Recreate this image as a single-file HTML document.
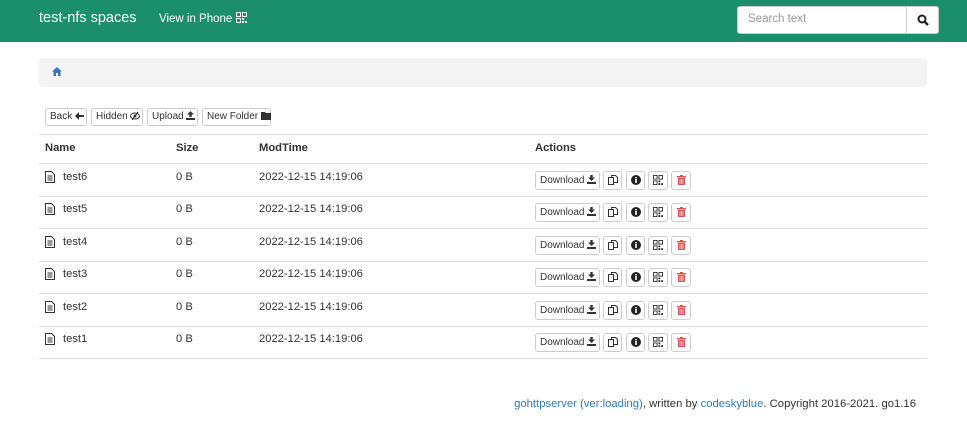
<!DOCTYPE html>
<html><head><meta charset="utf-8"><style>
*{box-sizing:border-box;margin:0;padding:0}
body{width:967px;height:428px;font-family:"Liberation Sans",Arial,sans-serif;font-size:11.2px;color:#333;background:#fff;position:relative;overflow:hidden}
.nav{position:absolute;left:0;top:0;width:967px;height:42px;background:#1b8e6b}
.a{position:absolute;white-space:nowrap}
.brand{left:39px;top:10px;font-size:14.5px;color:#fff}
.vp{left:159px;top:12px;font-size:11.5px;color:#fff}
.search{left:737px;top:6px;width:170px;height:28px;background:#fff;border:1px solid #ccc;border-radius:3px 0 0 3px;color:#999;padding:6px 10px;font-size:11.5px}
.sbtn{left:906px;top:6px;width:33px;height:28px;background:#fff;border:1px solid #ccc;border-radius:0 3px 3px 0}
.bc{left:39px;top:58px;width:888px;height:29px;background:#f4f4f4;border-radius:4px}
.btn{position:absolute;height:18px;border:1px solid #ccc;border-radius:3px;background:#fff;font-size:10px;padding:2px 4px;line-height:12px;white-space:nowrap;color:#333}
.hl{position:absolute;left:39px;width:888px;height:1px;background:#ddd}
.th{font-weight:bold;top:142px}
.ic{display:inline-block;vertical-align:-1px}
a{color:#337ab7;text-decoration:none}
</style></head><body>
<div class="nav"></div>
<div class="a brand">test-nfs spaces</div>
<div class="a vp">View in Phone <svg class="ic" width="11" height="11" viewBox="0 0 11 11" fill="#fff"><rect x=".5" y=".5" width="4" height="4" fill="none" stroke="#fff"/><rect x="6.5" y=".5" width="4" height="4" fill="none" stroke="#fff" /><rect x=".5" y="6.5" width="4" height="4" fill="none" stroke="#fff"/><rect x="6" y="6" width="2" height="2"/><rect x="9" y="9" width="2" height="2"/><rect x="6" y="9" width="2" height="2"/></svg></div>
<div class="a search">Search text</div>
<div class="a sbtn"><svg style="position:absolute;left:10px;top:7px" width="12" height="12" viewBox="0 0 12 12"><circle cx="5" cy="5" r="3.5" fill="none" stroke="#222" stroke-width="2"/><path d="M7.5 7.5L11 11" stroke="#222" stroke-width="2.4"/></svg></div>
<div class="a bc"><svg style="position:absolute;left:13px;top:9px" width="10" height="9" viewBox="0 0 10 9"><path d="M5 0L0 4.5h1.5V9h2.5V6h2v3h2.5V4.5H10z" fill="#337ab7"/></svg></div>
<div class="btn" style="left:45px;top:108px;width:42px">Back <svg class="ic" width="9" height="8" viewBox="0 0 9 8"><path d="M4 0L0 4l4 4V5h5V3H4z" fill="#333"/></svg></div>
<div class="btn" style="left:91px;top:108px;width:52px">Hidden <svg class="ic" width="10" height="8" viewBox="0 0 10 8"><ellipse cx="5" cy="4" rx="4.5" ry="3" fill="none" stroke="#333"/><circle cx="5" cy="4" r="1.5" fill="#333"/><path d="M8 0L2 8" stroke="#333"/></svg></div>
<div class="btn" style="left:147px;top:108px;width:51px">Upload <svg class="ic" width="9" height="9" viewBox="0 0 9 9"><path d="M4.5 0L1 3.5h2.3V6h2.4V3.5H8z" fill="#333"/><path d="M0 7h9v2H0z" fill="#333"/></svg></div>
<div class="btn" style="left:202px;top:108px;width:69px">New Folder <svg class="ic" width="10" height="8" viewBox="0 0 10 8"><path d="M0 0h4l1 1h5v7H0z" fill="#333"/></svg></div>
<div class="hl" style="top:134px"></div>
<div class="a th" style="left:45px">Name</div>
<div class="a th" style="left:176px">Size</div>
<div class="a th" style="left:259px">ModTime</div>
<div class="a th" style="left:535px">Actions</div>
<div class="hl" style="top:163px;height:1px"></div>
<div id="rows"></div>
<script>
var n=['test6','test5','test4','test3','test2','test1'],h='';
for(var i=0;i<6;i++){var y=164+i*32.4;
h+='<div class="hl" style="top:'+(y+32)+'px"></div>';
h+='<svg class="a" style="left:45px;top:'+(y+7)+'px" width="10" height="12" viewBox="0 0 10 12"><path d="M.5.5h6l3 3v8h-9z" fill="none" stroke="#333"/><path d="M2.5 5h5M2.5 7h5M2.5 9h5" stroke="#333"/></svg>';
h+='<div class="a" style="left:63px;top:'+(y+7)+'px">'+n[i]+'</div>';
h+='<div class="a" style="left:176px;top:'+(y+7)+'px">0 B</div>';
h+='<div class="a" style="left:259px;top:'+(y+7)+'px">2022-12-15 14:19:06</div>';
var t=y+7;
h+='<div class="btn" style="left:535px;top:'+t+'px;height:19px;width:65px;padding:3px 4px">Download <svg class="ic" width="9" height="9" viewBox="0 0 9 9"><path d="M4.5 6L1 2.5h2.3V0h2.4v2.5H8z" fill="#333"/><path d="M0 7h9v2H0z" fill="#333"/></svg></div>';
h+='<div class="btn" style="left:603px;top:'+t+'px;height:19px;width:19px;padding:3px 4px"><svg width="10" height="10" viewBox="0 0 10 10"><path d="M.5 2.5h5v7h-5z" fill="none" stroke="#333"/><path d="M3.5 2.5V.5h4l2 2v5h-4" fill="none" stroke="#333"/></svg></div>';
h+='<div class="btn" style="left:626px;top:'+t+'px;height:19px;width:19px;padding:3px 3.5px"><svg width="10" height="10"><circle cx="5" cy="5" r="5" fill="#222"/><rect x="4.2" y="4" width="1.6" height="4" fill="#fff"/><rect x="4.2" y="2" width="1.6" height="1.4" fill="#fff"/></svg></div>';
h+='<div class="btn" style="left:648px;top:'+t+'px;height:19px;width:20px;padding:3px 4px"><svg width="10" height="10" viewBox="0 0 11 11"><rect x=".5" y=".5" width="4" height="4" fill="none" stroke="#333"/><rect x="6.5" y=".5" width="4" height="4" fill="none" stroke="#333"/><rect x=".5" y="6.5" width="4" height="4" fill="none" stroke="#333"/><rect x="6" y="6" width="2" height="2" fill="#333"/><rect x="9" y="9" width="2" height="2" fill="#333"/><rect x="6" y="9" width="2" height="2" fill="#333"/></svg></div>';
h+='<div class="btn" style="left:671px;top:'+t+'px;height:19px;width:20px;padding:3px 5px"><svg width="9" height="10" viewBox="0 0 9 10"><rect x="0" y="1" width="9" height="1.5" fill="#d9534f"/><rect x="3" y="0" width="3" height="1.5" fill="#d9534f"/><path d="M1 3h7v7H1z" fill="#d9534f"/><path d="M3 4v5M4.5 4v5M6 4v5" stroke="#fff" stroke-width=".6"/></svg></div>';
}
document.getElementById('rows').outerHTML=h;
</script>
<div class="a" style="right:51px;top:398px;font-size:11.3px"><a>gohttpserver (ver:loading)</a>, written by <a>codeskyblue</a>. Copyright 2016-2021. go1.16</div>
</body></html>
